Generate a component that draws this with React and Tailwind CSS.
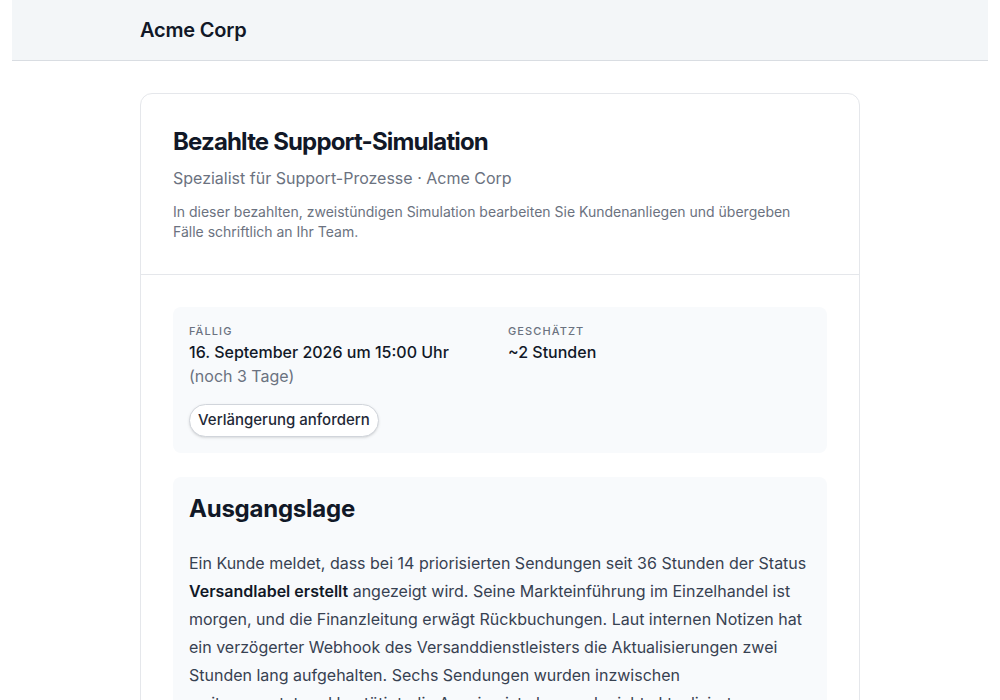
export default function App() {
  return (
    <div className="min-h-screen bg-white px-3" style={{ fontFamily: "Inter, 'Noto Sans', sans-serif" }}>
      <header className="h-[61px] bg-[#f3f6f8] border-b border-[#d9dde2]">
        <div className="mx-auto flex h-full max-w-[720px] items-center">
          <span className="text-[20px] font-semibold text-[#111827] tracking-[-0.01em]">Acme Corp</span>
        </div>
      </header>
      <main className="mx-auto mt-8 max-w-[720px]">
        <div className="rounded-xl border border-[#e5e7eb] bg-white">
          <div className="px-8 pt-8 pb-8 border-b border-[#e5e7eb]">
            <h1 className="text-[24px] leading-8 font-bold text-[#111827] tracking-[-0.035em]">Bezahlte Support-Simulation</h1>
            <p className="mt-2 text-[16px] leading-6 text-[#6b7280]">Spezialist für Support-Prozesse · Acme Corp</p>
            <p className="mt-3 max-w-[630px] text-[14px] leading-5 text-[#6b7280]">
              In dieser bezahlten, zweistündigen Simulation bearbeiten Sie Kundenanliegen und übergeben Fälle schriftlich an Ihr Team.
            </p>
          </div>
          <div className="p-8 flex flex-col gap-6">
            <div className="rounded-lg bg-[#f8fafc] p-4">
              <div className="grid grid-cols-2 gap-4">
                <div>
                  <div className="text-[11px] leading-[17px] font-medium uppercase tracking-[0.1em] text-[#6b7280]">Fällig</div>
                  <div className="text-[16px] leading-6 font-medium text-[#111827]">16. September 2026 um 15:00 Uhr</div>
                  <div className="text-[16px] leading-6 text-[#6b7280]">(noch 3 Tage)</div>
                </div>
                <div>
                  <div className="text-[11px] leading-[17px] font-medium uppercase tracking-[0.1em] text-[#6b7280]">Geschätzt</div>
                  <div className="text-[16px] leading-6 font-medium text-[#111827]">~2 Stunden</div>
                </div>
              </div>
              <button className="mt-4 h-[33px] rounded-full border border-[#d1d5db] bg-white px-2 text-[15px] font-medium text-[#1f2937] shadow-sm">
                Verlängerung anfordern
              </button>
            </div>
            <section className="rounded-lg bg-[#f8fafc] p-4">
              <h2 className="text-[24px] leading-8 font-bold text-[#111827] tracking-[-0.01em]">Ausgangslage</h2>
              <p className="mt-6 text-[16px] leading-7 text-[#374151]">
                Ein Kunde meldet, dass bei 14 priorisierten Sendungen seit 36 Stunden der Status{" "}
                <strong className="font-semibold text-[#111827]">Versandlabel erstellt</strong> angezeigt wird. Seine Markteinführung im Einzelhandel ist morgen, und die Finanzleitung erwägt Rückbuchungen. Laut internen Notizen hat ein verzögerter Webhook des Versanddienstleisters die Aktualisierungen zwei Stunden lang aufgehalten. Sechs Sendungen wurden inzwischen
                <br />
                weitergeroutet und bestätigt, die Anzeige ist aber noch nicht aktualisiert.
              </p>
            </section>
          </div>
        </div>
      </main>
    </div>
  );
}
